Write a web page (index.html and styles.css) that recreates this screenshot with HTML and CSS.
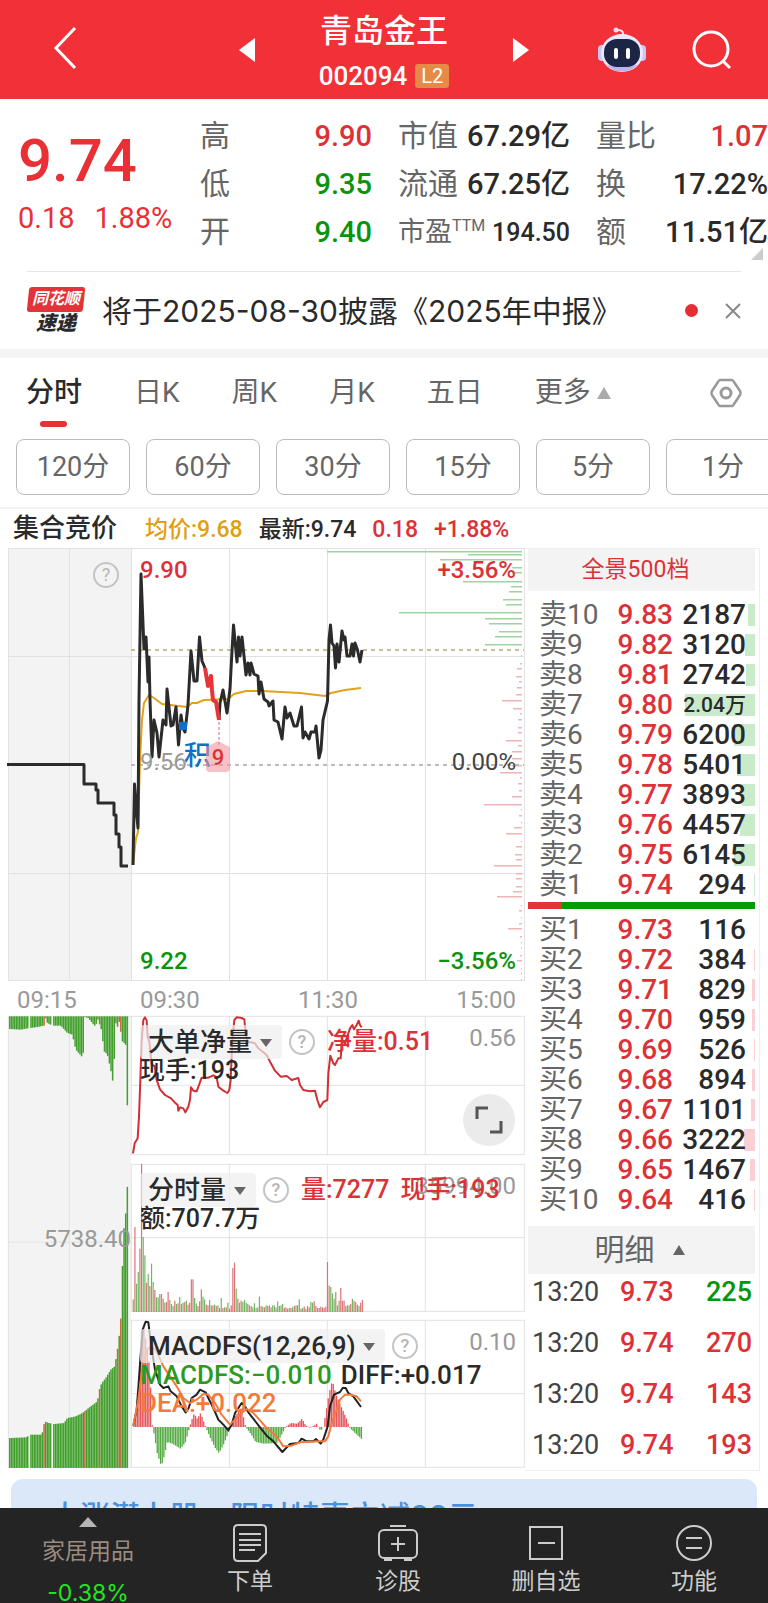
FILE: index.html
```html
<!DOCTYPE html>
<html lang="zh-CN">
<head>
  <meta charset="UTF-8">
  <meta name="viewport" content="width=device-width, initial-scale=1.0">
  <title>青岛金王 002094</title>
  <link rel="stylesheet" href="styles.css">
  <script src="charts.js" defer></script>
</head>
<body>
  <header class="topbar">
    <div class="topbar-left">
      <button class="icon-button" aria-label="返回">
        <svg width="24" height="42" viewBox="0 0 24 42"><path d="M22 1 3 21l19 20" fill="none" stroke="#fff" stroke-width="3"/></svg>
      </button>
    </div>
    <div class="topbar-center">
      <button class="icon-button" aria-label="上一只">
        <svg width="16" height="24" viewBox="0 0 16 24"><path d="M16 0v24L0 12z" fill="#fff"/></svg>
      </button>
      <div class="stock">
        <h1>青岛金王</h1>
        <div class="code">002094 <span class="level">L2</span></div>
      </div>
      <button class="icon-button" aria-label="下一只">
        <svg width="16" height="24" viewBox="0 0 16 24"><path d="M0 0v24l16-12z" fill="#fff"/></svg>
      </button>
    </div>
    <div class="topbar-right">
      <button class="icon-button" aria-label="智能助手">
        <svg width="48" height="46" viewBox="0 0 48 46">
          <path d="M25 9c1-4-1-6-5-6" fill="none" stroke="#f5e4f4" stroke-width="2"/>
          <circle cx="18" cy="3" r="2.500" fill="#f7dff0"/>
          <rect x="0" y="18" width="8" height="16" rx="4" fill="#c9c8f2"/>
          <rect x="40" y="18" width="8" height="16" rx="4" fill="#c9c8f2"/>
          <ellipse cx="24" cy="26" rx="21" ry="19" fill="#e9e8fc"/>
          <path d="M8 37c8 10 24 10 32 0-6 4-26 4-32 0z" fill="#b9b2ec"/>
          <rect x="6" y="12" width="36" height="28" rx="13" fill="#1d2547"/>
          <rect x="16" y="21" width="4" height="11" rx="2" fill="#fff"/>
          <rect x="28" y="21" width="4" height="11" rx="2" fill="#fff"/>
        </svg>
      </button>
      <button class="icon-button" aria-label="搜索">
        <svg width="40" height="40" viewBox="0 0 40 40"><circle cx="19" cy="19" r="17" fill="none" stroke="#fff" stroke-width="3"/><path d="m31 31 7 7" stroke="#fff" stroke-width="3"/></svg>
      </button>
    </div>
  </header>

  <main>
    <section class="quote">
      <div class="quote-price">
        <div class="last">9.74</div>
        <div class="change"><span>0.18</span><span>1.88%</span></div>
      </div>
      <dl class="stats">
        <div><dt>高</dt><dd class="up">9.90</dd></div>
        <div><dt>低</dt><dd class="down">9.35</dd></div>
        <div><dt>开</dt><dd class="down">9.40</dd></div>
      </dl>
      <dl class="stats">
        <div><dt>市值</dt><dd>67.29亿</dd></div>
        <div><dt>流通</dt><dd>67.25亿</dd></div>
        <div class="small"><dt>市盈<sup>TTM</sup></dt><dd>194.50</dd></div>
      </dl>
      <dl class="stats">
        <div><dt>量比</dt><dd class="up">1.07</dd></div>
        <div><dt>换</dt><dd>17.22%</dd></div>
        <div><dt>额</dt><dd>11.51亿</dd></div>
      </dl>
      <svg class="corner" width="12" height="12" viewBox="0 0 12 12"><path d="M12 0v12H0z" fill="#ccc"/></svg>
    </section>

    <section class="news">
      <div class="news-logo"><span>同花顺</span><b>速递</b></div>
      <a class="news-text" href="#">将于2025-08-30披露《2025年中报》</a>
      <span class="dot"></span>
      <button class="icon-button" aria-label="关闭">
        <svg width="16" height="16" viewBox="0 0 16 16"><path d="m1 1 14 14M15 1 1 15" stroke="#888" stroke-width="2"/></svg>
      </button>
    </section>

    <nav class="tabs">
      <button class="tab active">分时</button>
      <button class="tab">日K</button>
      <button class="tab">周K</button>
      <button class="tab">月K</button>
      <button class="tab">五日</button>
      <button class="tab">更多<svg width="14" height="12" viewBox="0 0 14 12"><path d="M7 0l7 12H0z" fill="#aaa"/></svg></button>
      <button class="icon-button tab-settings" aria-label="设置">
        <svg width="32" height="30" viewBox="0 0 32 30"><path d="M10 2h12q1 0 2 2l6 9q1 2 0 4l-6 9q-1 2-2 2H10q-1 0-2-2l-6-9q-1-2 0-4l6-9q1-2 2-2z" fill="none" stroke="#999" stroke-width="2.5"/><circle cx="16" cy="15" r="5" fill="none" stroke="#999" stroke-width="3"/></svg>
      </button>
    </nav>

    <div class="periods">
      <button>120分</button>
      <button>60分</button>
      <button>30分</button>
      <button>15分</button>
      <button>5分</button>
      <button>1分</button>
    </div>

    <div class="summary">
      <strong>集合竞价</strong>
      <span class="avg">均价:9.68</span>
      <span>最新:9.74</span>
      <span class="up">0.18</span>
      <span class="up">+1.88%</span>
    </div>

    <div class="board">
      <div class="charts">
        <!-- call auction, 09:15 - 09:25 -->
        <div class="pane auction">
          <svg class="plot" viewBox="8 548 123 433" preserveAspectRatio="none">
            <path class="grid" d="M8 548.5h123M8.5 548v433M69.5 548v433M8 656.5h123M8 873.5h123M8 980.5h123"/>
            <path class="line price-line" d="M7 764.5H84V784H96V790H98V803H114V815H116V834H119V847H121V866H128"/>
          </svg>
          <button class="help" aria-label="集合竞价说明">?</button>
        </div>

        <div class="pane price">
          <svg class="plot" viewBox="131 548 394 433" preserveAspectRatio="none">
            <path class="grid" d="M131 548.5h394M131.500 548v433M229.500 548v433M327.500 548v433M425.500 548v433M524.500 548v433M131 656.500h394M131 873.500h394M131 980.500h394"/>
            <g id="profile"></g>
            <path d="M131 650H524" stroke="#c9bd9a" stroke-width="2" stroke-dasharray="4 4"/>
            <path d="M131 765H524" stroke="#bbb" stroke-width="2" stroke-dasharray="4 4"/>
            <polyline class="line avg-line" points="133,865 136,838 138,832 140,760 142,720 144,703 149,695 154,698 162,704 187,707 192,703 197,703 204,700 228,699 234,694 246,691 262,691 300,693 325,696 331,693 345,690 361,688"/>
            <polyline class="line price-line" points="133,865 134.500,784 136,806 138,828 139,700 141,574 144,649 146,637 148,682 149,657 150,700 152,757 154,720 157,733 159,757 163,720 166,725 167,689 171,726 173,725 176,707 178.500,745 181,715 183,728 185,732 188,705 191,651 194,681 197,681 199.500,637 202,661 205,668"/>
            <polyline class="line price-line" points="219,720 220,703 223,690 227,713 230,689 231.500,660 233.500,625 237,662 238.500,637 240,656 242,637 246,675 248,663 250,675 251,663 254,674 258,676 259,694 261,682 264,699 268,702 269,706 273,701 274,720 278,722 282,739 285,707 287,718 290,713 294,726 297,726 301.500,707 303,738 305,732 309,739 311,732 315,732 316,726 319,758 321,750 323,720 327.500,701 329,640 330.500,625 332,643 334,646 335.500,668 337,644 339,662 342,631 344,640 345,637 347,656 350,656 352,644 353.500,656 355,643 357.500,650 360,662 362,650"/>
            <polyline class="line" stroke="#e83438" stroke-width="4" points="205,668 208,686 211,676 212,690 213,700 216,702 219,720"/>
            <path d="M219 722v23" stroke="#c86a94" stroke-dasharray="3 2"/>
            <rect x="179" y="722" width="8" height="8" fill="#1070c8"/>
          </svg>
          <span class="tag top-left up">9.90</span>
          <span class="tag top-right up">+3.56%</span>
          <span class="tag mid-left">9.56</span>
          <span class="tag mid-right">0.00%</span>
          <span class="tag bottom-left down">9.22</span>
          <span class="tag bottom-right down">−3.56%</span>
          <span class="mark-score">积</span>
          <span class="mark-nine">9</span>
        </div>

        <div class="axis auction-axis"><span>09:15</span></div>
        <div class="axis"><span>09:30</span><span>11:30</span><span>15:00</span></div>

        <div class="pane auction auction-volume">
          <svg class="plot" viewBox="24 48 369 1357" preserveAspectRatio="none">
            <path class="grid" d="M24 49h369M25 48v1357M208 48v1357M24 727h369"/>
            <g id="auctionBars"></g>
          </svg>
          <span class="tag auction-value">5738.40</span>
        </div>

        <div class="indicators">
          <div class="pane net">
            <svg class="plot" viewBox="393 48 1182 417" preserveAspectRatio="none">
              <path class="grid" d="M393 49h1182M394 48v417M688 48v417M982 48v417M1276 48v417M1573 48v417M393 256h1182M393 464h1182"/>
              <polyline class="line" stroke="#cf2f35" stroke-width="2" points="399,460 404,430 413,415 417,350 421,240 425,120 430,60 435,52 440,62 443,110 448,125 455,195 464,198 470,240 480,268 495,285 513,295 525,308 533,315 535,332 541,322 550,325 556,337 565,320 570,300 573,262 580,272 590,274 597,255 605,233 625,233 640,226 650,232 655,260 670,272 682,279 688,270 692,240 697,120 703,60 710,52 725,54 733,58 738,110 745,125 765,130 775,145 785,153 800,165 810,185 825,212 842,230 860,228 875,240 895,234 900,255 910,270 930,274 945,272 952,300 960,322 970,306 982,300 985,220 991,167 1000,190 1005,195 1015,175 1022,175 1026,120 1035,130 1050,85 1057,75 1062,88 1070,75 1076,62 1080,75 1085,82"/>
            </svg>
            <div class="legend">
              <span class="picker"><select aria-label="指标一"><option>大单净量</option></select></span>
              <button class="help" aria-label="大单净量说明">?</button>
              <span class="up">净量:0.51</span>
            </div>
            <div class="legend-more">现手:193</div>
            <span class="tag scale">0.56</span>
            <button class="expand" aria-label="横屏">
              <svg width="28" height="28" viewBox="0 0 28 28"><path d="M2 13V2h11M26 15v11H15" fill="none" stroke="#555" stroke-width="3"/></svg>
            </button>
          </div>

          <div class="pane volume">
            <svg class="plot" viewBox="393 492 1182 444" preserveAspectRatio="none">
              <path class="grid" d="M393 493h1182M394 492v444M688 492v444M982 492v444M1276 492v444M1573 492v444M393 713h1182M393 934h1182"/>
              <g id="volumeBars"></g>
            </svg>
            <div class="legend">
              <span class="picker"><select aria-label="指标二"><option>分时量</option></select></span>
              <button class="help" aria-label="分时量说明">?</button>
              <span class="up">量:7277</span>
              <span class="up">现手:193</span>
            </div>
            <div class="legend-more">额:707.7万</div>
            <span class="tag scale">35994.00</span>
          </div>

          <div class="pane macd">
            <svg class="plot" viewBox="393 961 1182 444" preserveAspectRatio="none">
              <path class="grid" d="M393 962h1182M394 961v444M688 961v444M982 961v444M1276 961v444M1573 961v444M393 1182h1182M393 1403h1182"/>
              <g id="macdBars"></g>
              <polyline class="line" stroke="#222" stroke-width="2" points="400,1278 410,1230 416,1150 421,1080 428,990 437,966 445,968 450,1010 457,1060 465,1110 480,1155 490,1165 505,1160 512,1175 530,1190 545,1220 557,1238 566,1225 575,1195 590,1185 600,1170 617,1178 625,1195 640,1225 655,1260 670,1275 685,1292 695,1275 705,1240 725,1210 735,1220 745,1238 770,1270 780,1283 800,1308 820,1325 847,1357 870,1333 895,1330 905,1317 920,1325 940,1325 948,1318 962,1332 970,1320 983,1280 990,1220 1002,1185 1020,1177 1028,1165 1037,1165 1045,1180 1060,1190 1083,1222"/>
              <polyline class="line" stroke="#f47a3c" stroke-width="2" points="400,1278 415,1200 425,1120 440,1050 455,1040 470,1055 490,1100 510,1130 530,1160 550,1195 570,1210 590,1200 610,1183 625,1185 645,1210 665,1245 690,1275 705,1260 725,1240 740,1228 760,1240 780,1262 800,1285 830,1310 850,1340 875,1338 900,1328 960,1325 975,1325 985,1310 995,1270 1010,1230 1020,1200 1035,1185 1050,1185 1070,1190 1083,1205"/>
            </svg>
            <div class="legend">
              <span class="picker"><select aria-label="指标三"><option>MACDFS(12,26,9)</option></select></span>
              <button class="help" aria-label="MACDFS说明">?</button>
            </div>
            <div class="legend-more macd-values">
              <span class="macd-value">MACDFS:−0.010</span>
              <span>DIFF:+0.017</span>
              <span class="dea-value">DEA:+0.022</span>
            </div>
            <span class="tag scale">0.10</span>
          </div>
        </div>
      </div>

      <aside class="book">
        <button class="book-title">全景500档</button>
        <table class="depth sell">
          <tbody>
            <tr><th>卖10</th><td>9.83</td><td>2187<i style="width:7px"></i></td></tr>
            <tr><th>卖9</th><td>9.82</td><td>3120<i style="width:10px"></i></td></tr>
            <tr><th>卖8</th><td>9.81</td><td>2742<i style="width:9px"></i></td></tr>
            <tr><th>卖7</th><td>9.80</td><td class="wan">2.04万<i style="width:70px"></i></td></tr>
            <tr><th>卖6</th><td>9.79</td><td>6200<i style="width:21px"></i></td></tr>
            <tr><th>卖5</th><td>9.78</td><td>5401<i style="width:18px"></i></td></tr>
            <tr><th>卖4</th><td>9.77</td><td>3893<i style="width:13px"></i></td></tr>
            <tr><th>卖3</th><td>9.76</td><td>4457<i style="width:15px"></i></td></tr>
            <tr><th>卖2</th><td>9.75</td><td>6145<i style="width:21px"></i></td></tr>
            <tr><th>卖1</th><td>9.74</td><td>294<i style="width:1px"></i></td></tr>
          </tbody>
        </table>
        <div class="ratio"><i style="width:15%"></i></div>
        <table class="depth buy">
          <tbody>
            <tr><th>买1</th><td>9.73</td><td>116<i style="width:0"></i></td></tr>
            <tr><th>买2</th><td>9.72</td><td>384<i style="width:1px"></i></td></tr>
            <tr><th>买3</th><td>9.71</td><td>829<i style="width:3px"></i></td></tr>
            <tr><th>买4</th><td>9.70</td><td>959<i style="width:3px"></i></td></tr>
            <tr><th>买5</th><td>9.69</td><td>526<i style="width:1px"></i></td></tr>
            <tr><th>买6</th><td>9.68</td><td>894<i style="width:3px"></i></td></tr>
            <tr><th>买7</th><td>9.67</td><td>1101<i style="width:4px"></i></td></tr>
            <tr><th>买8</th><td>9.66</td><td>3222<i style="width:11px"></i></td></tr>
            <tr><th>买9</th><td>9.65</td><td>1467<i style="width:5px"></i></td></tr>
            <tr><th>买10</th><td>9.64</td><td>416<i style="width:1px"></i></td></tr>
          </tbody>
        </table>
        <button class="detail-title">明细<svg width="12" height="10" viewBox="0 0 12 10"><path d="M6 0l6 10H0z" fill="#666"/></svg></button>
        <table class="ticks">
          <tbody>
            <tr><td>13:20</td><td class="up">9.73</td><td class="down">225</td></tr>
            <tr><td>13:20</td><td class="up">9.74</td><td class="up">270</td></tr>
            <tr><td>13:20</td><td class="up">9.74</td><td class="up">143</td></tr>
            <tr><td>13:20</td><td class="up">9.74</td><td class="up">193</td></tr>
          </tbody>
        </table>
      </aside>
    </div>

    <div class="promo-wrap">
      <a class="promo" href="#">大涨潜力股，限时特惠立减88元</a>
    </div>
  </main>

  <footer class="bottombar">
    <button class="sector">
      <svg width="18" height="10" viewBox="0 0 18 10"><path d="M9 0l9 10H0z" fill="#b5b5b5"/></svg>
      <span class="sector-name">家居用品</span>
      <span class="sector-change">-0.38%</span>
    </button>
    <button class="action">
      <svg width="36" height="40" viewBox="0 0 36 40"><path d="M6 2h24q4 0 4 4v24l-8 8H6q-4 0-4-4V6q0-4 4-4zM7 11h22M7 17h22M7 22h22M7 27h16" fill="none" stroke="#ccc" stroke-width="2"/></svg>
      下单
    </button>
    <button class="action">
      <svg width="40" height="40" viewBox="0 0 40 40"><rect x="1" y="7" width="38" height="28" rx="5" fill="none" stroke="#ccc" stroke-width="2"/><path d="M12 3h16M20 14v14M13 21h14" stroke="#ccc" stroke-width="2"/><path d="M6 36h8v2H6zM26 36h8v2h-8z" fill="#ccc"/></svg>
      诊股
    </button>
    <button class="action">
      <svg width="34" height="40" viewBox="0 0 34 40"><path d="M1 4h32v32H1zM9 20h17" fill="none" stroke="#ccc" stroke-width="2"/></svg>
      删自选
    </button>
    <button class="action">
      <svg width="38" height="40" viewBox="0 0 38 40"><circle cx="19" cy="20" r="17" fill="none" stroke="#ccc" stroke-width="2"/><path d="M11 15h16M11 25h16" stroke="#ccc" stroke-width="2"/></svg>
      功能
    </button>
  </footer>
</body>
</html>
```
FILE: styles.css
```css
:root {
  --red: #dc3237;
  --green: #0a930c;
  --text: #2a2a2a;
  --muted: #666;
  --line: #e6e6e6;
  --panel: #f3f3f3;
}

* {
  box-sizing: border-box;
}

body {
  margin: 0;
  background: #fff;
  color: var(--text);
  font-family: Roboto, "Noto Sans CJK SC", sans-serif;
  overflow-x: hidden;
}

button,
select {
  border: 0;
  padding: 0;
  background: none;
  color: inherit;
  font: inherit;
  cursor: pointer;
}

svg {
  display: block;
}

a {
  color: inherit;
  text-decoration: none;
}

dl,
dd,
h1 {
  margin: 0;
}

.up {
  color: var(--red);
}

.down {
  color: var(--green);
}

/* top bar */
.topbar {
  display: grid;
  grid-template-columns: 1fr 290px 1fr;
  align-items: center;
  height: 99px;
  background: #f23038;
  color: #fff;
}

.topbar-left {
  padding-left: 53px;
}

.topbar-center {
  display: flex;
  align-items: center;
  justify-content: space-between;
}

.topbar-right {
  display: flex;
  align-items: center;
  justify-content: flex-end;
  gap: 46px;
  padding-right: 36px;
}

.stock {
  padding-top: 8px;
  text-align: center;
}

.stock h1 {
  font-size: 32px;
  font-weight: 500;
  line-height: 44px;
}

.code {
  display: flex;
  align-items: center;
  gap: 8px;
  font-size: 26px;
  font-weight: 500;
  line-height: 46px;
}

.level {
  padding: 0 6px;
  border-radius: 3px;
  background: #e58b46;
  font-size: 20px;
  font-weight: 400;
  line-height: 24px;
}

/* quote */
.quote {
  position: relative;
  display: grid;
  grid-template-columns: 174px 1fr 1fr 1fr;
  column-gap: 26px;
  padding: 13px 0 15px;
}

.quote-price {
  padding: 13px 0 0 18px;
  color: #e83035;
}

.last {
  font-size: 60px;
  font-weight: 500;
  line-height: 72px;
}

.change {
  display: flex;
  gap: 20px;
  font-size: 29px;
  line-height: 42px;
}

.stats > div {
  display: flex;
  align-items: baseline;
  justify-content: space-between;
  height: 48px;
  font-size: 29px;
  line-height: 48px;
  white-space: nowrap;
}

.stats dt {
  color: var(--muted);
  font-size: 30px;
}

.stats dd {
  font-weight: 500;
}

.stats .small {
  font-size: 25px;
}

.stats .small dt {
  font-size: 27px;
}

.stats sup {
  font-size: 16px;
  line-height: 16px;
}

.corner {
  position: absolute;
  right: 5px;
  bottom: 11px;
}

/* news strip */
.news {
  display: flex;
  align-items: center;
  height: 78px;
  margin: 0 27px;
  border-top: 1px solid var(--line);
}

.news-logo {
  position: relative;
  z-index: 0;
  width: 58px;
  color: #fff;
  font-size: 16px;
  font-style: italic;
  font-weight: 700;
  line-height: 24px;
  text-align: center;
}

.news-logo::before {
  content: "";
  position: absolute;
  z-index: -1;
  top: 0;
  right: 1px;
  left: 1px;
  height: 25px;
  border-radius: 3px;
  background: #e23338;
  transform: skewX(-6deg);
}

.news-logo span,
.news-logo b {
  display: block;
}

.news-logo b {
  color: var(--text);
  font-size: 20px;
}

.news-text {
  flex: 1;
  padding-left: 17px;
  font-family: Inter, "Noto Sans CJK SC", sans-serif;
  font-size: 30px;
  line-height: 44px;
  white-space: nowrap;
}

.dot {
  width: 13px;
  height: 13px;
  margin-right: 27px;
  border-radius: 50%;
  background: #e62d31;
}

/* chart tabs */
.tabs {
  display: flex;
  gap: 52px;
  align-items: flex-start;
  padding: 13px 26px 0 26px;
  border-top: 9px solid #f4f4f4;
  color: var(--muted);
  font-size: 28px;
}

.tab {
  position: relative;
  display: flex;
  align-items: center;
  gap: 6px;
  height: 68px;
  padding-bottom: 24px;
  line-height: 40px;
  white-space: nowrap;
}

.tab.active {
  color: var(--text);
  font-weight: 500;
}

.tab.active::after {
  content: "";
  position: absolute;
  bottom: 12px;
  left: 14px;
  width: 27px;
  height: 6px;
  border-radius: 3px;
  background: #e83035;
}

.tab-settings {
  margin: 7px 0 0 auto;
}

.periods {
  display: flex;
  gap: 16px;
  padding: 0 0 12px 16px;
  border-bottom: 2px solid var(--panel);
  overflow: hidden;
}

.periods button {
  flex: 0 0 114px;
  height: 56px;
  border: 1px solid #bbb;
  border-radius: 8px;
  color: var(--muted);
  font-size: 27px;
  line-height: 40px;
}

.summary {
  display: flex;
  align-items: baseline;
  gap: 16px;
  height: 39px;
  padding-left: 13px;
  font-size: 23px;
  font-weight: 500;
  line-height: 39px;
}

.summary strong {
  margin-right: 12px;
  font-size: 26px;
  font-weight: 500;
}

.avg {
  color: #e0a010;
}

/* charts */
.board {
  display: grid;
  grid-template-columns: 1fr 235px;
  padding: 0 8px;
}

.charts {
  display: grid;
  grid-template-columns: 123px 1fr;
  grid-template-rows: 433px 35px 452px;
}

.pane {
  position: relative;
}

.plot {
  width: 100%;
  height: 100%;
  overflow: visible;
}

.auction {
  background: var(--panel);
}

.grid {
  fill: none;
  stroke: #e2e2e2;
  stroke-width: 1;
  vector-effect: non-scaling-stroke;
}

.line {
  fill: none;
  stroke-linejoin: round;
  vector-effect: non-scaling-stroke;
}

.price-line {
  stroke: #2b2b2b;
  stroke-width: 3;
}

.avg-line {
  stroke: #e3a21a;
  stroke-width: 2;
}

.tag {
  position: absolute;
  font-size: 24px;
  line-height: 28px;
}

.top-left,
.top-right {
  top: 8px;
}

.mid-left,
.mid-right {
  top: 200px;
}

.bottom-left,
.bottom-right {
  bottom: 6px;
}

.top-left,
.mid-left,
.bottom-left {
  left: 9px;
}

.top-right,
.mid-right,
.bottom-right,
.scale {
  right: 9px;
}

.top-left,
.top-right,
.bottom-left,
.bottom-right {
  font-weight: 500;
}

.mid-left,
.scale,
.auction-value {
  color: #999;
}

.mid-right {
  color: #444;
}

.scale {
  top: 8px;
}

.auction-value {
  top: 209px;
  right: 0;
}

.mark-score {
  position: absolute;
  top: 190px;
  left: 53px;
  color: #1070c8;
  font-size: 27px;
  font-weight: 500;
  line-height: 36px;
}

.mark-nine {
  position: absolute;
  top: 193px;
  left: 75px;
  width: 24px;
  padding-top: 3px;
  border-radius: 4px;
  background: rgba(245, 150, 160, .6);
  clip-path: polygon(0 20%, 50% 0, 100% 20%, 100% 100%, 0 100%);
  color: var(--red);
  font-size: 22px;
  font-weight: 500;
  line-height: 28px;
  text-align: center;
}

.help {
  width: 26px;
  height: 26px;
  border: 2px solid #c4c4c4;
  border-radius: 50%;
  color: #b5b5b5;
  font-size: 18px;
  line-height: 20px;
}

.auction .help {
  position: absolute;
  top: 14px;
  right: 12px;
}

.axis {
  display: flex;
  justify-content: space-between;
  padding: 0 9px;
  color: #999;
  font-size: 24px;
  line-height: 38px;
}

.indicators {
  display: flex;
  flex-direction: column;
}

.net {
  height: 139px;
  margin-bottom: 9px;
}

.volume {
  height: 148px;
  margin-bottom: 8px;
}

.macd {
  height: 148px;
}

.legend,
.legend-more {
  position: absolute;
  z-index: 1;
  left: 9px;
  white-space: nowrap;
  font-size: 25px;
  font-weight: 500;
}

.legend {
  top: 9px;
  display: flex;
  align-items: center;
  gap: 11px;
  height: 34px;
  line-height: 34px;
}

.legend .help {
  margin: 0 1px 0 -4px;
}

.legend-more {
  top: 41px;
  line-height: 28px;
}

.picker {
  position: relative;
  display: flex;
}

.picker::after {
  content: "";
  position: absolute;
  top: 14px;
  right: 10px;
  border-top: 8px solid #666;
  border-right: 6px solid transparent;
  border-left: 6px solid transparent;
}

.picker select {
  height: 34px;
  padding: 0 29px 0 8px;
  border-radius: 4px;
  appearance: none;
  background: rgba(238, 238, 238, .7);
  font-size: 26px;
}

.macd-value {
  color: #2c9a1e;
}

.dea-value {
  color: #f47a3c;
}

.macd-values {
  display: grid;
  grid-template-columns: auto auto;
  column-gap: 9px;
  font-size: 26px;
}

.expand {
  position: absolute;
  right: 10px;
  bottom: 9px;
  display: grid;
  width: 52px;
  height: 52px;
  place-items: center;
  border-radius: 50%;
  background: #ebebeb;
}

/* order book */
.book {
  padding: 0 4px 0 3px;
  border: 1px solid #eee;
  border-width: 1px 1px 1px 0;
}

.book-title {
  display: block;
  width: 100%;
  height: 42px;
  margin-bottom: 9px;
  padding-right: 12px;
  background: var(--panel);
  color: var(--red);
  font-size: 23px;
  line-height: 40px;
}

.depth,
.ticks {
  width: 100%;
  border-collapse: collapse;
  table-layout: fixed;
  font-size: 28px;
  font-weight: 500;
}

.depth th,
.depth td {
  position: relative;
  height: 30px;
  padding: 0;
  line-height: 30px;
  text-align: right;
}

.depth th {
  width: 80px;
  padding-left: 11px;
  color: var(--muted);
  font-weight: 400;
  text-align: left;
}

.depth td {
  width: 65px;
  color: var(--red);
}

.depth td:last-child {
  width: auto;
  padding-right: 9px;
  color: var(--text);
}

.depth td.wan {
  font-size: 21px;
}

.depth i {
  position: absolute;
  z-index: -1;
  top: 4px;
  right: 0;
  height: 22px;
}

.sell i {
  background: #c9ebca;
}

.buy i {
  background: #fbd0d5;
}

.ratio {
  height: 7px;
  margin: 2px 0 6px;
  background: #069a08;
}

.ratio i {
  display: block;
  height: 100%;
  background: #e53336;
}

.detail-title {
  display: flex;
  align-items: center;
  justify-content: center;
  gap: 18px;
  width: 100%;
  height: 48px;
  margin-top: 11px;
  padding-right: 4px;
  background: var(--panel);
  color: var(--muted);
  font-size: 30px;
  line-height: 44px;
}

.ticks {
  margin-top: -8px;
  font-size: 27px;
}

.ticks td {
  height: 51px;
  padding: 0;
}

.ticks td:first-child {
  width: 92px;
  padding-left: 4px;
  color: #444;
  font-weight: 400;
}

.ticks td:last-child {
  padding-right: 3px;
  text-align: right;
}

/* promo strip, its lower part runs under the bottom bar */
.promo-wrap {
  height: 37px;
  padding: 8px 11px 0;
  overflow: hidden;
}

.promo {
  display: block;
  height: 80px;
  padding: 15px 39px;
  border-radius: 12px;
  background: #dbe8fa;
  color: #4b90dc;
  font-family: Inter, "Noto Sans CJK SC", sans-serif;
  font-size: 30px;
  font-weight: 500;
  line-height: 44px;
}

/* bottom bar */
.bottombar {
  display: grid;
  grid-template-columns: 176px 1fr 1fr 1fr 1fr;
  height: 95px;
  background: #242424;
  color: #ccc;
  font-size: 23px;
  overflow: hidden;
}

.sector,
.action {
  display: flex;
  flex-direction: column;
  align-items: center;
  height: 95px;
}

.sector {
  height: 108px;
  padding-top: 9px;
}

.sector-name {
  padding-top: 6px;
  color: #9b8b80;
  line-height: 38px;
}

.sector-change {
  color: #1fe81f;
  font-family: Inter, sans-serif;
  line-height: 44px;
}

.action {
  gap: 1px;
  padding-top: 15px;
  line-height: 36px;
}
```
FILE: charts.js
```js
const RED = '#c9653c';
const GREEN = '#43a02e';

function bar(group, x, y, width, height, color) {
  const rect = document.createElementNS('http://www.w3.org/2000/svg', 'rect');
  rect.setAttribute('x', x);
  rect.setAttribute('y', y);
  rect.setAttribute('width', width);
  rect.setAttribute('height', height);
  rect.setAttribute('fill', color);
  group.appendChild(rect);
}

// linear interpolation between [x, value] knots
function valueAt(knots, x) {
  for (let i = 1; i < knots.length; i++) {
    const [x0, v0] = knots[i - 1];
    const [x1, v1] = knots[i];
    if (x <= x1) return v0 + (v1 - v0) * (x - x0) / (x1 - x0);
  }
  return knots[knots.length - 1][1];
}

// price distribution on the right edge of the price chart: [y, length]
const supply = [[551, 195], [554, 54], [559, 82], [567, 10], [572, 10], [581, 59], [586, 11], [591, 13], [599, 19], [604, 16],
  [612, 123], [618, 37], [623, 33], [631, 23], [636, 27], [644, 37]];
const demand = [[655, 1], [663, 2], [668, 5], [676, 6], [681, 3], [687, 5], [694, 6], [700, 20], [708, 9], [713, 2], [719, 4],
  [727, 4], [732, 4], [740, 16], [745, 4], [751, 10], [758, 10], [765, 10], [772, 22], [777, 2], [783, 4], [790, 3], [796, 10],
  [804, 38], [809, 1], [815, 3], [822, 1], [827, 8], [833, 16], [841, 1], [846, 6], [854, 7], [859, 6], [865, 28], [873, 6],
  [878, 6], [886, 6], [891, 9], [896, 25], [905, 1], [910, 3], [917, 1], [923, 3], [928, 14], [936, 2], [942, 1], [947, 1],
  [955, 2], [960, 5], [968, 1], [973, 1], [979, 1]];
const profile = document.getElementById('profile');
supply.forEach(([y, len]) => bar(profile, 522 - len, y, len, 1.5, '#9fd3a0'));
demand.forEach(([y, len]) => bar(profile, 522 - len, y, len, 1.5, '#f0b4b8'));

// call auction: unmatched on top, matched at the bottom
const unmatched = [[27, 38], [60, 40], [88, 35], [110, 32], [130, 28], [135, 5], [140, 20], [155, 28], [180, 28], [200, 50],
  [215, 55], [225, 100], [247, 125], [251, 2], [262, 5], [285, 32], [290, 5], [302, 40], [310, 105], [320, 115], [330, 160],
  [339, 212], [343, 2], [348, 40], [355, 15], [365, 75], [377, 88], [380, 280], [384, 280]];
const matched = [[27, 90], [75, 92], [90, 100], [120, 100], [127, 110], [131, 140], [145, 135], [160, 132], [190, 135], [200, 150],
  [225, 155], [245, 165], [270, 185], [290, 200], [297, 240], [303, 255], [315, 270], [330, 295], [342, 305], [350, 355],
  [357, 410], [362, 470], [367, 690], [372, 740], [378, 790], [380, 850], [384, 850]];
const auction = document.getElementById('auctionBars');
for (let i = 0; i < 73; i++) {
  const x = 27 + i * 4.9;
  if (i === 12 || i === 26) continue;
  const color = [21, 46, 55, 66, 68].includes(i) ? RED : GREEN;
  const top = valueAt(unmatched, x);
  const bottom = valueAt(matched, x);
  bar(auction, x, 49, 4.5, top, color);
  bar(auction, x, 1405 - bottom, 4.5, bottom, color);
}

// minute volume, negative = falling minute
const minutes = [-38, 255, -85, -120, 190, 444, -225, -170, 88, -114, 78, -145, -90, 66, -44, -44, 54, -54, 40, -28, 30, 60, -36,
  -24, -18, 34, -24, 26, -45, -24, -28, 30, -34, 22, 28, 98, 98, -42, -26, 18, 32, 68, -46, -38, 22, 20, -36, -20, 20, -22, 18,
  -20, 12, -42, 12, -14, 14, -28, 10, 20, 132, 148, -70, 40, -28, 34, -30, -36, -28, 24, -20, 18, -14, -26, -12, 14, -46,
  18, -16, 14, -20, 18, -20, 14, -20, -20, -14, -32, 18, -20, -24, 12, 14, 10, -12, 12, -14, 18, -20, 20, -38, 10, -12, 16,
  -10, 18, 14, -30, -28, 32, 18, -12, 12, 16, 14, 12, 16, 150, 80, -75, -56, -40, 60, -20, -34, 72, 34, 34, -18, 20, -20, 24,
  -40, 34, -30, 22, -18, 28, 36];
const volume = document.getElementById('volumeBars');
minutes.forEach((v, i) => {
  const x = 398 + i * 4.98;
  bar(volume, x, 936 - Math.abs(v), 3.6, Math.abs(v), v > 0 ? '#dd7375' : '#71b762');
});

// MACD histogram
const macd = [[400, 4], [405, 40], [413, 100], [418, 220], [427, 312], [440, 235], [447, 180], [452, 70], [455, 0], [460, -20],
  [470, -80], [482, -118], [490, -90], [500, -45], [515, -50], [540, -65], [555, -45], [567, 0], [573, 20], [580, 40],
  [590, 25], [600, 42], [615, 0], [630, -35], [645, -65], [655, -78], [670, -50], [690, 0], [705, 35], [722, 60], [735, 0],
  [750, -20], [765, -45], [790, -50], [830, -48], [855, 0], [870, 12], [890, 10], [904, 25], [915, 5], [930, -3], [948, 10],
  [960, -12], [968, 0], [975, 40], [985, 100], [995, 140], [1005, 100], [1020, 65], [1040, 20], [1045, 0], [1060, -15],
  [1085, -38]];
const histogram = document.getElementById('macdBars');
for (let x = 400; x < 1085; x += 4.98) {
  const v = valueAt(macd, x);
  bar(histogram, x, v > 0 ? 1282 - v : 1282, 4, Math.abs(v), v > 0 ? '#e3565a' : '#55ab43');
}
```
